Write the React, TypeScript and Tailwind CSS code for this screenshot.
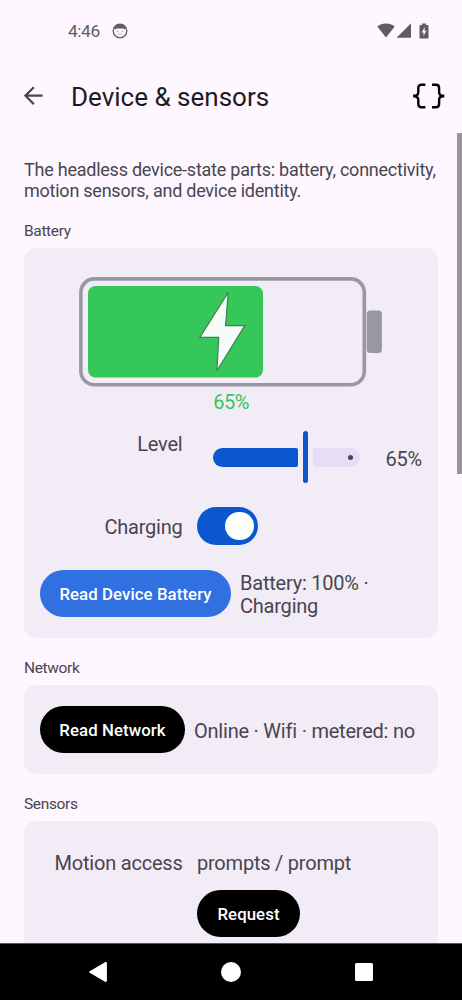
import { useState } from 'react';
import type { ReactNode } from 'react';
import clsx from 'clsx';

interface SectionProps {
  title: string;
  className?: string;
  children: ReactNode;
}

interface PillButtonProps {
  label: string;
  className?: string;
  onClick?: () => void;
}

function StatusBar() {
  return (
    <div className="flex h-[61px] shrink-0 items-center pl-[68px] pr-[33px] text-[#5f5d63]">
      <span className="pt-px text-[17.4px] leading-5 tracking-[-0.45px]">4:46</span>
      <svg className="ml-[12px] h-4 w-4" viewBox="0 0 16 16" fill="none">
        <circle cx="8" cy="8" r="6.8" stroke="currentColor" strokeWidth="1.3" />
        <path d="M1.8 5.4C2.6 2.8 5 .9 8 .9s5.4 1.900 6.200 4.500l-1.400 1.200-1.200-1H4.400l-1.200 1z" fill="currentColor" />
        <path d="M4.600 8.200h1.800M9.600 8.200h1.800M5.800 11h4.400" stroke="currentColor" strokeWidth="0.800" opacity="0.600" />
      </svg>
      <div className="flex-1" />
      <svg className="h-[15px] w-[18px]" viewBox="0 0 18 15" fill="currentColor">
        <path d="M0.300 3.600C2.700 1.500 5.700.4 9 .4s6.300 1.100 8.700 3.200L9 14.400z" />
      </svg>
      <svg className="ml-[1px] h-[15px] w-[15px]" viewBox="0 0 15 15" fill="currentColor">
        <path d="M15 .3v14.400H.6z" />
      </svg>
      <svg className="ml-[8px] h-4 w-[10px]" viewBox="0 0 10 16">
        <path d="M3 .4h4v1.500h1.800c.4 0 .7.300.7.700v12.200c0 .4-.3.700-.7.700H1.200a.7.700 0 0 1-.7-.7V2.600c0-.4.300-.7.700-.7H3z" fill="currentColor" />
        <path d="M5.600 4.200v3.600h1.800L4.500 13V9.600H2.700z" fill="#fef7ff" />
      </svg>
    </div>
  );
}

function Header() {
  return (
    <header className="flex h-[72px] shrink-0 items-center pb-[3px] pl-[24px] pr-[17px]">
      <button type="button" aria-label="Back" className="h-[19px] w-[19px] text-[#49454f]">
        <svg viewBox="0 0 19 19" fill="none" stroke="currentColor" strokeWidth="2.200" className="h-full w-full">
          <path d="M9.800 1.300 1.400 9.700l8.400 8.400M1.400 9.700h17.200" />
        </svg>
      </button>
      <h1 className="ml-[28px] flex-1 pt-[2px] text-[26px] leading-8 text-[#1d1b20]">Device &amp; sensors</h1>
      <button type="button" aria-label="View code" className="h-[26px] w-[33px] text-black">
        <svg viewBox="0 0 33 26" fill="none" stroke="currentColor" strokeWidth="2.400" className="h-full w-full">
          <path d="M13.400 1.700H9.400C7.400 1.700 6.300 2.900 6.300 4.900v4c0 2.400-1.300 3.800-4 3.800v.6c2.700 0 4 1.400 4 3.800v4c0 2 1.100 3.200 3.100 3.200h4" />
          <path d="M20 1.700h4c2 0 3.100 1.200 3.100 3.200v4c0 2.400 1.300 3.800 4 3.800v.6c-2.700 0-4 1.400-4 3.800v4c0 2-1.100 3.200-3.100 3.200h-4" />
        </svg>
      </button>
    </header>
  );
}

function Section({ title, className, children }: SectionProps) {
  return (
    <section className={className}>
      <h2 className="pt-px text-[15.500px] leading-[19px] tracking-[-0.350px] text-[#49454f]">{title}</h2>
      <div className="mt-[7px] rounded-[12px] bg-[#f2ecf6] px-4">{children}</div>
    </section>
  );
}

function PillButton({ label, className, onClick }: PillButtonProps) {
  return (
    <button
      type="button"
      onClick={onClick}
      className={clsx('h-[47px] shrink-0 rounded-full pt-[2px] text-center text-[16.800px] font-medium tracking-[0.080px] text-white', className)}
    >
      {label}
    </button>
  );
}

function BatteryGauge({ level, charging }: { level: number; charging: boolean }) {
  return (
    <div className="flex flex-col items-center">
      <svg className="h-[110px] w-[304px]" viewBox="0 0 304 110">
        <rect x="1.900" y="1.900" width="283.400" height="105.800" rx="13.500" fill="none" stroke="#9a97a4" strokeWidth="3.600" />
        <rect x="9" y="9" width={level * 2.692} height="91.500" rx="7.500" fill="#35c759" />
        <rect x="287.700" y="33.500" width="15.200" height="42.500" rx="3.500" fill="#9a97a4" />
        {charging && (
          <path
            d="M149.200 15.500 120.800 60.400h18.900L137.900 93.800 165.800 48.600h-19.200z"
            fill="#f6fcf8"
            stroke="#3f7f52"
            strokeWidth="1.200"
          />
        )}
      </svg>
      <span className="mt-[3px] text-[20px] leading-6 tracking-[-0.500px] text-[#35c759]">{level}%</span>
    </div>
  );
}

function LevelSlider({ level }: { level: number }) {
  return (
    <div className="flex h-[52px] w-[147px] items-center">
      <div className="h-[19px] rounded-l-[9.500px] rounded-r-[2px] bg-[#0b57d0]" style={{ width: level * 1.315 }} />
      <div className="ml-[4.500px] h-[52px] w-[5px] shrink-0 rounded-full bg-[#0b57d0]" />
      <div className="ml-[5px] flex h-[19px] flex-1 items-center justify-end rounded-l-[2px] rounded-r-[9.500px] bg-[#e6def6] pr-[7px]">
        <div className="h-[5px] w-[5px] rounded-full bg-[#49454f]" />
      </div>
    </div>
  );
}

function Toggle({ on, onChange }: { on: boolean; onChange: (on: boolean) => void }) {
  return (
    <button
      type="button"
      role="switch"
      aria-checked={on}
      aria-label="Charging"
      onClick={() => onChange(!on)}
      className={clsx(
        'flex h-[38px] w-[61px] items-center rounded-full px-[4.500px]',
        on ? 'justify-end bg-[#0b57d0]' : 'justify-start bg-[#79747e]',
      )}
    >
      <span className="h-[28.500px] w-[28.500px] rounded-full bg-white" />
    </button>
  );
}

function NavBar() {
  return (
    <nav className="flex h-[57px] shrink-0 items-center justify-between border-t border-[#55535a] bg-black pl-[88px] pr-[89px]">
      <svg className="h-[20px] w-[19px]" viewBox="0 0 19 20" fill="#fff">
        <path d="M17 .3c1-.5 1.900 0 1.900 1v17.400c0 1-.9 1.500-1.900 1L1.700 10.800c-.9-.5-.9-1.100 0-1.600z" />
      </svg>
      <div className="h-5 w-5 rounded-full bg-white" />
      <div className="h-[18px] w-[18px] rounded-[1.500px] bg-white" />
    </nav>
  );
}

export default function App() {
  const [charging, setCharging] = useState(true);
  const level = 65;

  return (
    <div className="flex h-[1000px] w-[462px] flex-col overflow-hidden bg-[#fef7ff] font-[Roboto,sans-serif] text-[20px] tracking-[-0.220px] text-[#49454f]">
      <StatusBar />
      <div className="tracking-normal">
        <Header />
      </div>

      <main className="relative min-h-0 flex-1 overflow-hidden px-6">
        <p className="pt-[26px] text-[18px] leading-[21px] tracking-[-0.240px]">
          The headless device-state parts: battery, connectivity, motion sensors, and device identity.
        </p>

        <Section title="Battery" className="mt-[20px]">
          <div className="flex h-[390px] flex-col pt-[29px]">
            <BatteryGauge level={level} charging={charging} />
            <div className="mt-[17px] flex h-[52px]">
              <span className="w-[142.500px] pt-px text-right leading-6">Level</span>
              <div className="ml-[30.500px]">
                <LevelSlider level={level} />
              </div>
              <span className="ml-[25.500px] leading-[56px]">{level}%</span>
            </div>
            <div className="mt-[24px] flex h-[38px] items-center">
              <span className="w-[142.500px] pt-px text-right">Charging</span>
              <div className="ml-[14.500px]">
                <Toggle on={charging} onChange={setCharging} />
              </div>
            </div>
            <div className="mt-[25px] flex h-[47px] items-center">
              <PillButton label="Read Device Battery" className="w-[191px] bg-[#3070e0]" />
              <span className="ml-[9px] w-[150px] pt-[2px] leading-[23px]">Battery: 100% · Charging</span>
            </div>
          </div>
        </Section>

        <Section title="Network" className="mt-[20px]">
          <div className="flex h-[89px] items-center">
            <PillButton label="Read Network" className="w-[145px] bg-black" />
            <span className="ml-[9px] whitespace-nowrap pt-[2px]">Online · Wifi · metered: no</span>
          </div>
        </Section>

        <Section title="Sensors" className="mt-[19.500px]">
          <div className="flex h-[180px] flex-col pt-[30.500px]">
            <div className="flex">
              <span className="w-[142.500px] text-right leading-6">Motion access</span>
              <span className="ml-[14.500px] leading-6">prompts / prompt</span>
            </div>
            <PillButton label="Request" className="ml-[157px] mt-[15px] w-[103px] bg-black" />
          </div>
        </Section>

        <div className="absolute right-0 top-0 h-[341px] w-[5px] bg-[#9a969d]" />
      </main>

      <NavBar />
    </div>
  );
}
